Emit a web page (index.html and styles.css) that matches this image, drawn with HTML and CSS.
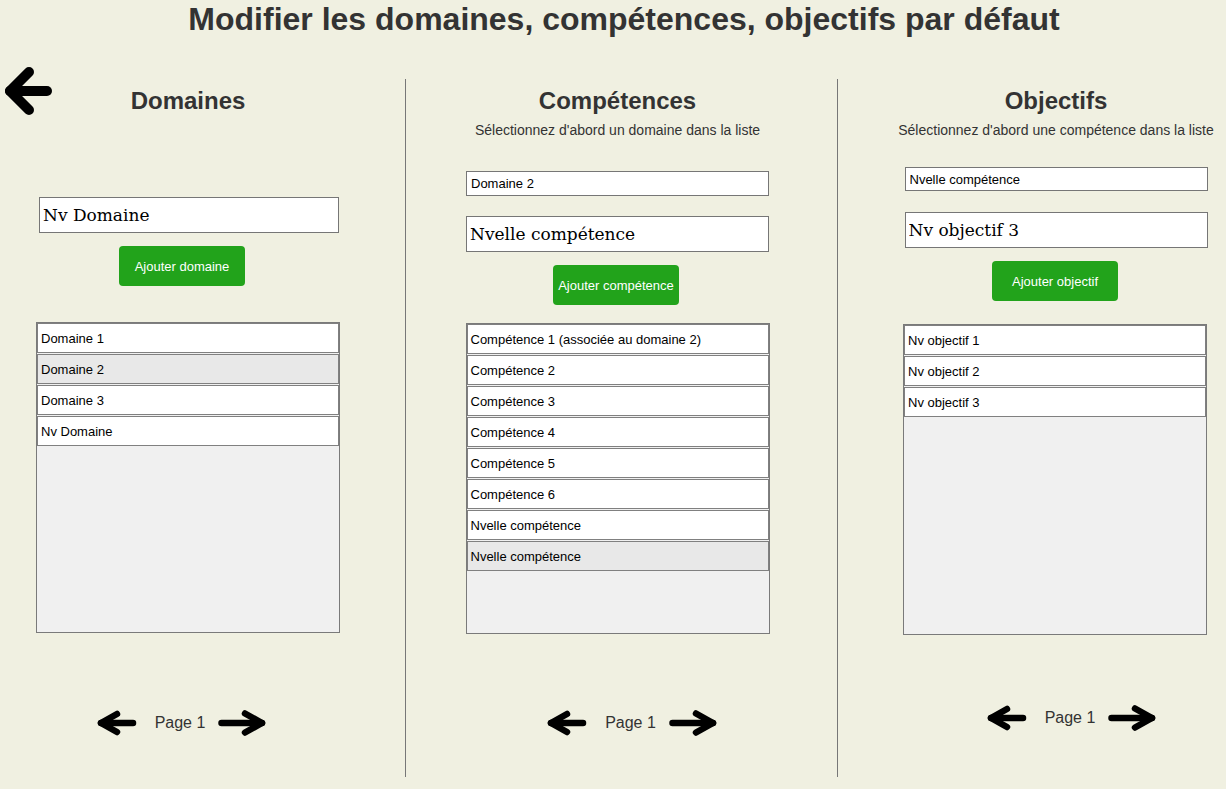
FILE: index.html
```html
<!DOCTYPE html>
<html lang="fr">
<head>
<meta charset="utf-8">
<title>Modifier les domaines</title>
<link rel="stylesheet" href="styles.css">
</head>
<body>
<a class="back" href="#"><svg width="60" height="60" viewBox="0 0 60 60"><polyline points="29,12 10,31 29,50" fill="none" stroke="#000" stroke-width="10" stroke-linecap="round" stroke-linejoin="round"/><line x1="10" y1="31" x2="47" y2="31" stroke="#000" stroke-width="10" stroke-linecap="round"/></svg></a>
<h1 class="title">Modifier les domaines, compétences, objectifs par défaut</h1>
<div class="columns">
  <section class="col col-1">
    <h2 class="col-title">Domaines</h2>
    <input class="big-input in-dom" type="text" value="Nv Domaine">
    <button class="btn btn-dom">Ajouter domaine</button>
    <ul class="list list-dom">
      <li class="item">Domaine 1</li>
      <li class="item selected">Domaine 2</li>
      <li class="item">Domaine 3</li>
      <li class="item">Nv Domaine</li>
    </ul>
    <div class="pager pager-1">
      <svg class="arr-l" width="40" height="26" viewBox="0 0 40 26"><polyline points="20,4 4,13 20,22" fill="none" stroke="#000" stroke-width="6.5" stroke-linecap="round" stroke-linejoin="round"/><line x1="4" y1="13" x2="36" y2="13" stroke="#000" stroke-width="6.5" stroke-linecap="round"/></svg>
      <span class="page">Page 1</span>
      <svg class="arr-r" width="48" height="26" viewBox="0 0 48 26"><polyline points="27,3.5 44,13 27,22.5" fill="none" stroke="#000" stroke-width="6.5" stroke-linecap="round" stroke-linejoin="round"/><line x1="3.5" y1="13" x2="44" y2="13" stroke="#000" stroke-width="6.5" stroke-linecap="round"/></svg>
    </div>
  </section>
  <section class="col col-2">
    <h2 class="col-title">Compétences</h2>
    <p class="hint">Sélectionnez d'abord un domaine dans la liste</p>
    <input class="small-input in-sel2" type="text" value="Domaine 2">
    <input class="big-input in-comp" type="text" value="Nvelle compétence">
    <button class="btn btn-comp">Ajouter compétence</button>
    <ul class="list list-comp">
      <li class="item">Compétence 1 (associée au domaine 2)</li>
      <li class="item">Compétence 2</li>
      <li class="item">Compétence 3</li>
      <li class="item">Compétence 4</li>
      <li class="item">Compétence 5</li>
      <li class="item">Compétence 6</li>
      <li class="item">Nvelle compétence</li>
      <li class="item selected">Nvelle compétence</li>
    </ul>
    <div class="pager pager-2">
      <svg class="arr-l" width="40" height="26" viewBox="0 0 40 26"><polyline points="20,4 4,13 20,22" fill="none" stroke="#000" stroke-width="6.5" stroke-linecap="round" stroke-linejoin="round"/><line x1="4" y1="13" x2="36" y2="13" stroke="#000" stroke-width="6.5" stroke-linecap="round"/></svg>
      <span class="page">Page 1</span>
      <svg class="arr-r" width="48" height="26" viewBox="0 0 48 26"><polyline points="27,3.5 44,13 27,22.5" fill="none" stroke="#000" stroke-width="6.5" stroke-linecap="round" stroke-linejoin="round"/><line x1="3.5" y1="13" x2="44" y2="13" stroke="#000" stroke-width="6.5" stroke-linecap="round"/></svg>
    </div>
  </section>
  <section class="col col-3">
    <h2 class="col-title">Objectifs</h2>
    <p class="hint">Sélectionnez d'abord une compétence dans la liste</p>
    <input class="small-input in-sel3" type="text" value="Nvelle compétence">
    <input class="big-input in-obj" type="text" value="Nv objectif 3">
    <button class="btn btn-obj">Ajouter objectif</button>
    <ul class="list list-obj">
      <li class="item">Nv objectif 1</li>
      <li class="item">Nv objectif 2</li>
      <li class="item">Nv objectif 3</li>
    </ul>
    <div class="pager pager-3">
      <svg class="arr-l" width="40" height="26" viewBox="0 0 40 26"><polyline points="20,4 4,13 20,22" fill="none" stroke="#000" stroke-width="6.5" stroke-linecap="round" stroke-linejoin="round"/><line x1="4" y1="13" x2="36" y2="13" stroke="#000" stroke-width="6.5" stroke-linecap="round"/></svg>
      <span class="page">Page 1</span>
      <svg class="arr-r" width="48" height="26" viewBox="0 0 48 26"><polyline points="27,3.5 44,13 27,22.5" fill="none" stroke="#000" stroke-width="6.5" stroke-linecap="round" stroke-linejoin="round"/><line x1="3.5" y1="13" x2="44" y2="13" stroke="#000" stroke-width="6.5" stroke-linecap="round"/></svg>
    </div>
  </section>
</div>
</body>
</html>
```
FILE: styles.css
```css
* { box-sizing: border-box; }
html, body {
  margin: 0;
  padding: 0;
  background: #f0f0e1;
  font-family: "Liberation Sans", Arial, sans-serif;
  color: #333;
  overflow: hidden;
}
.back {
  position: absolute;
  left: 0;
  top: 60px;
  display: block;
  line-height: 0;
}
.title {
  margin: 0;
  padding: 1px 0 0 22px;
  font-size: 32px;
  line-height: 37px;
  font-weight: bold;
  text-align: center;
  color: #333;
}
.columns {
  display: flex;
  margin-top: 41px;
  height: 698px;
}
.col {
  display: flex;
  flex-direction: column;
  align-items: center;
  padding-top: 8px;
}
.col-1 { width: 406px; border-right: 1px solid #777; padding-right: 29px; }
.col-2 { width: 432px; border-right: 1px solid #777; padding-right: 8px; }
.col-3 { flex: 1; padding-left: 48px; }
.col-title {
  margin: 0;
  font-size: 24px;
  line-height: 28px;
  font-weight: bold;
  color: #333;
}
.hint {
  margin: 7px 0 0;
  font-size: 14px;
  line-height: 16px;
  color: #333;
  white-space: nowrap;
}
.big-input {
  display: block;
  height: 36px;
  width: 303px;
  border: 1px solid #767676;
  background: #fff;
  padding: 0 3px;
  font-family: "DejaVu Serif", Georgia, serif;
  font-size: 17px;
  color: #000;
  outline: none;
}
.small-input {
  display: block;
  height: 25px;
  width: 303px;
  border: 1px solid #767676;
  background: #fff;
  padding: 0 4px;
  font-family: "Liberation Sans", Arial, sans-serif;
  font-size: 13px;
  color: #000;
}
.in-dom { width: 300px; margin-top: 82px; margin-left: 2px; }
.in-sel2 { margin-top: 33px; }
.in-comp { margin-top: 20px; }
.in-sel3 { margin-top: 29px; height: 24px; }
.in-obj { margin-top: 21px; }
.btn {
  display: block;
  width: 126px;
  height: 40px;
  margin-top: 13px;
  border: none;
  border-radius: 4px;
  background: #22a31b;
  color: #fff;
  font-family: "Liberation Sans", Arial, sans-serif;
  font-size: 13px;
  padding: 0;
}
.btn-dom { margin-right: 12px; }
.btn-comp { margin-right: 3px; }
.btn-obj { margin-right: 2px; }
.list {
  list-style: none;
  margin: 0;
  padding: 0;
  width: 304px;
  height: 311px;
  border: 1px solid #7a7a7a;
  background: #f0f0f0;
}
.list-dom { margin-top: 36px; }
.list-comp { margin-top: 18px; }
.list-obj { margin-top: 23px; margin-right: 2px; }
.item {
  height: 30px;
  margin-bottom: 1px;
  border: 1px solid #808080;
  background: #fff;
  padding-left: 3px;
  font-size: 13px;
  line-height: 29px;
  color: #000;
  white-space: nowrap;
}
.item.selected { background: #e8e8e8; }
.pager {
  display: flex;
  align-items: center;
  height: 26px;
}
.pager-1 { margin-top: 77px; margin-right: 13px; }
.pager-2 { margin-top: 76px; margin-left: 29px; }
.pager-3 { margin-top: 70px; margin-left: 31px; }
.arr-l { display: block; margin-right: 18px; }
.arr-r { display: block; margin-left: 13px; }
.page {
  font-size: 16px;
  color: #333;
}
```
